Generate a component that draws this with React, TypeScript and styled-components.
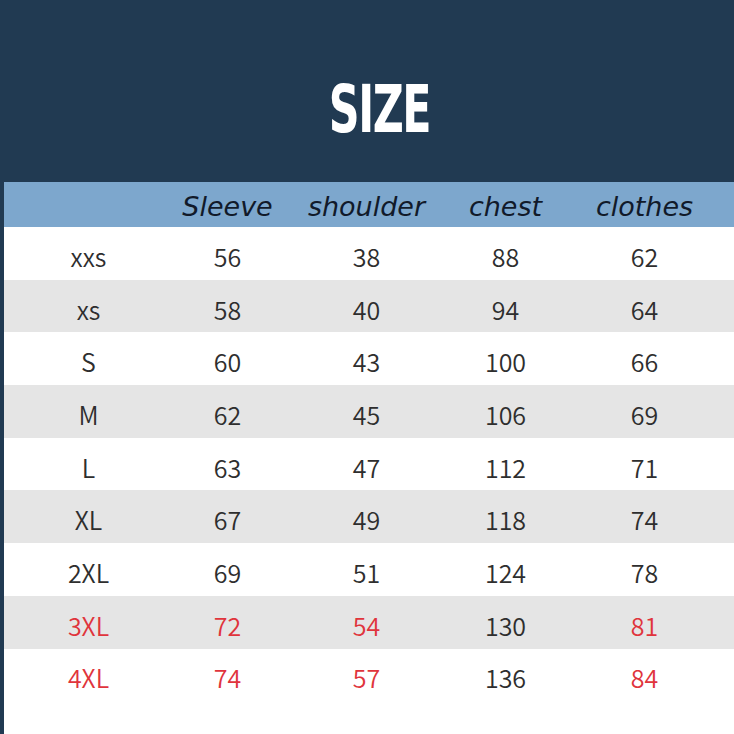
import React from "react"
import styled, { createGlobalStyle } from "styled-components"

const GlobalStyle = createGlobalStyle`
	html, body {
		margin: 0;
		padding: 0;
		background: #ffffff;
	}
`

const Page = styled.div`
	width: 734px;
	height: 734px;
	box-sizing: border-box;
	border-left: 4px solid #213a52;
	background: #ffffff;
	display: flex;
	flex-direction: column;
	overflow: hidden;
`

const Banner = styled.div`
	height: 182px;
	margin-left: -4px;
	background: #213a52;
	display: flex;
	align-items: center;
	justify-content: center;
	padding-left: 24px;
	padding-top: 36px;
	box-sizing: border-box;
`

const Title = styled.h1`
	margin: 0;
	font-family: "DejaVu Sans Condensed", "DejaVu Sans", sans-serif;
	font-weight: 700;
	font-size: 68px;
	line-height: 1;
	color: #ffffff;
	letter-spacing: -2px;
	transform: scale(0.7, 0.98);
`

const Row = styled.div<{ $bg: string; $height: number }>`
	display: grid;
	grid-template-columns: repeat(5, 139px);
	padding-left: 15px;
	height: ${({ $height }) => $height}px;
	background: ${({ $bg }) => $bg};
	align-items: center;
`

const HeadCell = styled.div`
	text-align: center;
	font-family: "DejaVu Sans", sans-serif;
	font-style: italic;
	font-size: 27px;
	color: #111a2a;
	padding-top: 4px;
`

const Cell = styled.div<{ $red?: boolean }>`
	text-align: center;
	font-family: "Noto Sans CJK SC", "Noto Sans", sans-serif;
	font-weight: 350;
	font-size: 25px;
	padding-top: 5px;
	color: ${({ $red }) => ($red ? "#e0343c" : "#2e2e2e")};
`

type SizeRow = {
	size: string
	values: number[]
	red: boolean[]
}

const rows: SizeRow[] = [
	{ size: "xxs", values: [56, 38, 88, 62], red: [false, false, false, false, false] },
	{ size: "xs", values: [58, 40, 94, 64], red: [false, false, false, false, false] },
	{ size: "S", values: [60, 43, 100, 66], red: [false, false, false, false, false] },
	{ size: "M", values: [62, 45, 106, 69], red: [false, false, false, false, false] },
	{ size: "L", values: [63, 47, 112, 71], red: [false, false, false, false, false] },
	{ size: "XL", values: [67, 49, 118, 74], red: [false, false, false, false, false] },
	{ size: "2XL", values: [69, 51, 124, 78], red: [false, false, false, false, false] },
	{ size: "3XL", values: [72, 54, 130, 81], red: [true, true, true, false, true] },
	{ size: "4XL", values: [74, 57, 136, 84], red: [true, true, true, false, true] },
]

const App: React.FC = () => {
	return (
		<>
			<GlobalStyle />
			<Page>
				<Banner>
					<Title>SIZE</Title>
				</Banner>
				<Row $bg="#7da7cd" $height={45}>
					<HeadCell />
					<HeadCell>Sleeve</HeadCell>
					<HeadCell>shoulder</HeadCell>
					<HeadCell>chest</HeadCell>
					<HeadCell>clothes</HeadCell>
				</Row>
				{rows.map((row, i) => (
					<Row key={row.size} $bg={i % 2 === 1 ? "#e5e5e5" : "#ffffff"} $height={52.7}>
						<Cell $red={row.red[0]}>{row.size}</Cell>
						{row.values.map((v, j) => (
							<Cell key={j} $red={row.red[j + 1]}>
								{v}
							</Cell>
						))}
					</Row>
				))}
			</Page>
		</>
	)
}

export default App
